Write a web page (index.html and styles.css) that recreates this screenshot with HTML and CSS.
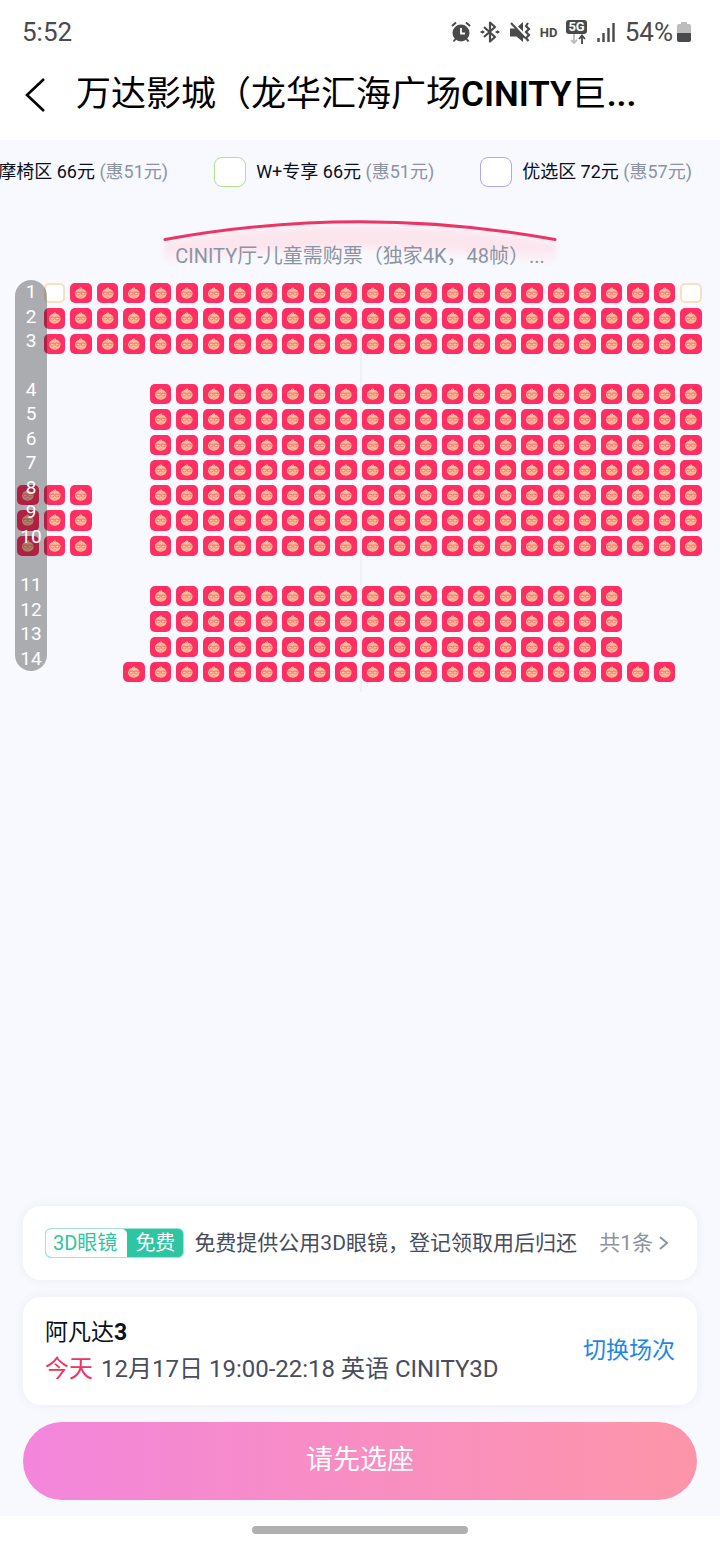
FILE: index.html
```html
<!DOCTYPE html>
<html lang="zh-CN">
<head>
    <meta charset="UTF-8">
    <meta name="viewport" content="width=device-width, initial-scale=1.0">
    <title>选座</title>
    <link rel="stylesheet" href="styles.css">
</head>
<body>

<!-- Shared seat face -->
<svg class="defs" width="0" height="0" aria-hidden="true">
    <symbol id="face" viewBox="0 0 22 21">
        <path d="M9.200 5.200c.8.1 1.200.3 1.500.7.200-.6.100-1.200 0-1.700 1 .400 1.600 1 1.700 1.800 2.700.500 4.600 2.500 4.600 4.900 0 3.200-2.600 5.400-6 5.400s-6-2.200-6-5.400c0-2.400 1.700-4.300 4.200-5z" fill="#ffbd98"/>
        <path d="M5.200 9.600h11.600" stroke="#ee6a6c" stroke-width=".8"/>
        <rect x="6.600" y="9.600" width="3.700" height="2.700" rx="1.200" fill="#ffc9a6" stroke="#ee6a6c" stroke-width=".8"/>
        <rect x="11.700" y="9.600" width="3.700" height="2.700" rx="1.200" fill="#ffc9a6" stroke="#ee6a6c" stroke-width=".8"/>
        <path d="M9.500 14.300q1.500.8 3 0" fill="none" stroke="#ee6a6c" stroke-width=".6"/>
    </symbol>
</svg>

<header class="header">
    <div class="status">
        <span class="clock">5:52</span>
        <div class="status-icons">
            <svg width="20" height="22" viewBox="0 0 20 22">
                <circle cx="10" cy="12" r="8.500" fill="#4a4a4a"/>
                <path d="M1 5l4-3.500M19 5l-4-3.500M4.500 18l-2 2.500M15.500 18l2 2.500" stroke="#4a4a4a" stroke-width="2"/>
                <path d="M10 7v5.500h4" fill="none" stroke="#fff" stroke-width="1.800"/>
            </svg>
            <svg width="20" height="22" viewBox="0 0 20 22">
                <path d="M4 6l11 10-5 4.500v-19L15 6 4 16" fill="none" stroke="#4a4a4a" stroke-width="2.200" stroke-linejoin="round"/>
                <path d="M0 11l2.500-1.800L5 11l-2.500 1.800zM15 11l2.500-1.800L20 11l-2.500 1.800z" fill="#4a4a4a"/>
            </svg>
            <svg width="22" height="22" viewBox="0 0 22 22">
                <path d="M1 7.500h5l8 7V21l-6.500-5.500H1zM9 5.500L14 1v9.500z" fill="#4a4a4a"/>
                <path d="M2 2l14 15" stroke="#4a4a4a" stroke-width="2"/>
                <path d="M19 2l-2 3 3 3-3 3 3 3-3 3 2.500 3" fill="none" stroke="#4a4a4a" stroke-width="2.200"/>
            </svg>
            <span class="hd">HD</span>
            <div class="net">
                <span class="net-label">5G</span>
                <svg width="18" height="10" viewBox="0 0 18 10">
                    <path d="M6 0v9M3 6l3 3 3-3" fill="none" stroke="#bdbdbd" stroke-width="1.800"/>
                    <path d="M14 10V1.500M11 5l3-3.500L17 5" fill="none" stroke="#4a4a4a" stroke-width="1.800"/>
                </svg>
            </div>
            <svg width="20" height="22" viewBox="0 0 20 22">
                <path d="M2.500 17v4M7.500 12v9M12.500 7v14M17.500 2v19" stroke="#4a4a4a" stroke-width="2.400"/>
            </svg>
            <span class="percent">54%</span>
            <svg width="16" height="22" viewBox="0 0 16 22">
                <path d="M5 1h6v2h2q2 0 2 2v7H1V5q0-2 2-2h2z" fill="#bdbdbd"/>
                <path d="M1 12h14v7q0 2-2 2H3q-2 0-2-2z" fill="#4a4a4a"/>
            </svg>
        </div>
    </div>
    <div class="title-bar">
        <button class="back" type="button" aria-label="返回">
            <svg width="22" height="36" viewBox="0 0 22 36">
                <path d="M20 2L3 18l17 16" fill="none" stroke="#000" stroke-width="2.600"/>
            </svg>
        </button>
        <h1 class="title">万达影城（龙华汇海广场<b>CINITY</b>巨<b>...</b></h1>
    </div>
</header>

<main class="main">
    <div class="legend">
        <div class="legend-item"><span>按摩椅区 66元 <em>(惠51元)</em></span></div>
        <div class="legend-item"><i class="swatch green"></i><span>W+专享 66元 <em>(惠51元)</em></span></div>
        <div class="legend-item"><i class="swatch purple"></i><span>优选区 72元 <em>(惠57元)</em></span></div>
    </div>

    <div class="screen">
        <svg class="arc" viewBox="0 0 420 56" aria-hidden="true">
            <defs>
                <linearGradient id="glow" x1="0" y1="0" x2="0" y2="1">
                    <stop offset="0" stop-color="#fce6ee"/>
                    <stop offset=".6" stop-color="#fce6ee"/>
                    <stop offset="1" stop-color="#fce6ee" stop-opacity="0"/>
                </linearGradient>
                <filter id="soft"><feGaussianBlur stdDeviation="3"/></filter>
            </defs>
            <path d="M14 26Q210-8 406 26v24Q210 16 14 50z" fill="url(#glow)" filter="url(#soft)"/>
            <path d="M15 23.500Q210-12 405 23.500" fill="none" stroke="#ef3463" stroke-width="3" stroke-linecap="round"/>
        </svg>
        <p class="hall">CINITY厅-儿童需购票（独家4K，48帧）...</p>
    </div>

    <div class="hall-map">
        <div class="seats" id="seats"></div>
        <ol class="rail" id="rail"></ol>
    </div>

    <div class="bottom">
        <a class="card notice" href="#">
            <span class="tag"><span class="tag-name">3D眼镜</span><span class="tag-free">免费</span></span>
            <span class="notice-text">免费提供公用3D眼镜，登记领取用后归还</span>
            <span class="count">共1条</span>
            <svg width="10" height="16" viewBox="0 0 10 16">
                <path d="M1 2l7 6-7 6" fill="none" stroke="#8c93a3" stroke-width="2"/>
            </svg>
        </a>
        <section class="card show">
            <div>
                <h2 class="movie">阿凡达<b>3</b></h2>
                <p class="session"><span class="today">今天</span>12月17日 19:00-22:18 英语 CINITY3D</p>
            </div>
            <a class="switch" href="#">切换场次</a>
        </section>
        <button class="submit" type="button">请先选座</button>
    </div>
</main>

<footer class="nav"><div class="home"></div></footer>

<script src="seats.js"></script>
</body>
</html>
```

FILE: styles.css
```css
* {
    box-sizing: border-box;
}

body {
    margin: 0;
    min-height: 100vh;
    display: flex;
    flex-direction: column;
    background: #fff;
    color: #0b1020;
    font-family: Roboto, "Noto Sans CJK SC", sans-serif;
}

h1, h2, p, ol {
    margin: 0;
    padding: 0;
    font-weight: 400;
}

a {
    text-decoration: none;
}

button {
    border: 0;
    padding: 0;
    background: none;
    font-family: inherit;
}

svg {
    display: block;
    flex: none;
}

.defs {
    position: absolute;
}

/* Status bar and title */
.status {
    height: 64px;
    padding: 0 28px 0 22px;
    display: flex;
    align-items: center;
    justify-content: space-between;
    color: #4a4a4a;
    font-size: 26px;
}

.status-icons {
    display: flex;
    align-items: center;
    gap: 9px;
}

.hd {
    font-size: 13px;
    font-weight: 700;
}

.net {
    display: flex;
    flex-direction: column;
    align-items: center;
}

.net-label {
    padding: 0 2px;
    border-radius: 3px;
    background: #4a4a4a;
    color: #fff;
    font-size: 13px;
    font-weight: 700;
    line-height: 14px;
}

.percent {
    margin-right: -6px;
}

.title-bar {
    height: 76px;
    padding: 0 24px 14px;
    display: flex;
    align-items: center;
    gap: 30px;
}

.title {
    color: #000;
    font-size: 35px;
    line-height: 48px;
    white-space: nowrap;
}

.title b {
    font-weight: 600;
}

/* Seat area */
.main {
    flex: 1;
    display: flex;
    flex-direction: column;
    background: #f8f9fe;
}

.legend {
    height: 64px;
    padding-right: 28px;
    display: flex;
    align-items: center;
    justify-content: flex-end;
    gap: 46px;
    overflow: hidden;
    font-size: 18px;
    line-height: 24px;
    white-space: nowrap;
}

.legend-item {
    display: flex;
    align-items: center;
    gap: 10px;
}

.legend em {
    color: #8c93a3;
    font-style: normal;
}

.swatch {
    width: 32px;
    height: 30px;
    border: 1px solid;
    border-radius: 8px;
    background: #fff;
}

.green {
    border-color: #b3e08a;
}

.purple {
    border-color: #b3a5e6;
}

.screen {
    display: grid;
    justify-items: center;
    padding-top: 12px;
}

.screen > * {
    grid-area: 1 / 1;
}

.arc {
    width: 420px;
}

.hall {
    position: relative;
    padding-top: 28px;
    color: #8c93a3;
    font-size: 20px;
    line-height: 24px;
}

.hall-map {
    position: relative;
    margin-top: 11px;
    padding: 0 18px 0 17px;
}

/* Centre line of the hall */
.hall-map::before {
    content: "";
    position: absolute;
    left: 50%;
    top: 0;
    bottom: -10px;
    border-left: 2px solid #f0f1f5;
}

.seats {
    position: relative;
    display: grid;
    grid-template-columns: repeat(26, 1fr);
    grid-template-rows: repeat(16, 1fr);
    gap: 5px;
    aspect-ratio: 685 / 399;
}

.seat {
    min-width: 0;
    min-height: 0;
    border-radius: 5px;
    background: #ff2e63;
}

.seat svg {
    width: 100%;
    height: 100%;
}

.seat.free {
    border: 2px solid #fae0bf;
    background: #fff;
}

/* Row numbers, over the left edge of the seats */
.rail {
    position: absolute;
    left: 15px;
    top: -3px;
    width: 32px;
    height: 98%;
    display: grid;
    grid-template-rows: repeat(16, 1fr);
    align-items: center;
    border-radius: 16px;
    background: rgba(0, 0, 0, 0.31);
    color: #fff;
    font-size: 19px;
    line-height: 24px;
    list-style: none;
    text-align: center;
}

/* Bottom cards */
.bottom {
    margin-top: auto;
    padding: 0 23px 16px;
    display: flex;
    flex-direction: column;
    gap: 17px;
}

.card {
    padding: 0 22px;
    display: flex;
    align-items: center;
    border-radius: 18px;
    background: #fff;
    box-shadow: 0 0 12px rgba(20, 40, 60, 0.05);
}

.notice {
    height: 74px;
    padding-right: 28px;
    color: #474d5c;
    font-size: 21px;
    line-height: 28px;
    white-space: nowrap;
}

.tag {
    display: flex;
    margin-right: 10px;
    border: 1px solid #a5e3d3;
    border-radius: 6px;
    background: #2dc5a2;
    font-size: 20px;
    line-height: 28px;
}

.tag-name {
    padding: 0 10px 0 7px;
    border-radius: 5px 5px 0 5px;
    background: #fff;
    color: #2dc5a2;
}

.tag-free {
    padding: 0 8px;
    color: #fff;
}

.count {
    margin-left: auto;
    margin-right: 6px;
    color: #8c93a3;
}

.show {
    height: 108px;
    justify-content: space-between;
    font-size: 23px;
    line-height: 36px;
}

.movie {
    font-size: 23px;
}

.session {
    color: #474d5c;
    font-size: 24px;
}

.today {
    margin-right: 8px;
    color: #ef3463;
}

.switch {
    color: #1d87e6;
}

.submit {
    height: 78px;
    padding-bottom: 2px;
    border-radius: 39px;
    background: linear-gradient(90deg, #f386dc, #fd95a9);
    color: #fff;
    font-size: 27px;
    line-height: 36px;
}

.nav {
    height: 28px;
    display: flex;
    align-items: center;
    justify-content: center;
}

.home {
    width: 30%;
    height: 8px;
    border-radius: 4px;
    background: #b0b0b0;
}
```

FILE: seats.js
```js
// Each line is one grid row: label, sold column ranges, free columns
const rows = [
    { no: 1, sold: [[2, 24]], free: [1, 25] },
    { no: 2, sold: [[1, 25]] },
    { no: 3, sold: [[1, 25]] },
    null,
    { no: 4, sold: [[5, 25]] },
    { no: 5, sold: [[5, 25]] },
    { no: 6, sold: [[5, 25]] },
    { no: 7, sold: [[5, 25]] },
    { no: 8, sold: [[0, 2], [5, 25]] },
    { no: 9, sold: [[0, 2], [5, 25]] },
    { no: 10, sold: [[0, 2], [5, 25]] },
    null,
    { no: 11, sold: [[5, 22]] },
    { no: 12, sold: [[5, 22]] },
    { no: 13, sold: [[5, 22]] },
    { no: 14, sold: [[4, 24]] }
];

const seats = document.getElementById('seats');
const rail = document.getElementById('rail');

function addSeat(row, col, no, free) {
    const seat = document.createElement('button');
    seat.type = 'button';
    seat.className = free ? 'seat free' : 'seat';
    seat.disabled = !free;
    seat.setAttribute('aria-label', no + '排' + (col + 1) + '座');
    seat.style.gridArea = (row + 1) + ' / ' + (col + 1);
    if (!free) {
        seat.innerHTML = '<svg><use href="#face"/></svg>';
    }
    seats.appendChild(seat);
}

rows.forEach((row, i) => {
    const label = document.createElement('li');
    label.textContent = row ? row.no : '';
    rail.appendChild(label);
    if (!row) return;

    row.sold.forEach(([from, to]) => {
        for (let col = from; col <= to; col++) addSeat(i, col, row.no, false);
    });
    (row.free || []).forEach(col => addSeat(i, col, row.no, true));
});
```
